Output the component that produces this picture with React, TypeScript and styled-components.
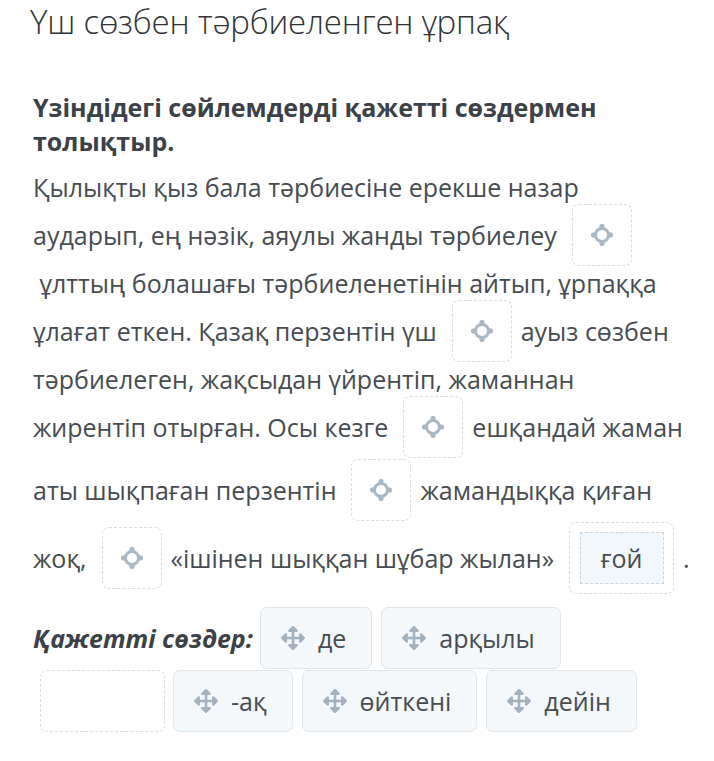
import * as React from 'react';
import styled, {createGlobalStyle} from 'styled-components';
import {FaArrowsAlt} from 'react-icons/fa';

const GlobalStyle = createGlobalStyle`
  body {
    margin: 0;
    background: #ffffff;
    font-family: "Open Sans", "Liberation Sans", sans-serif;
  }
`;

const Page = styled.div`
  width: 714px;
  height: 761px;
  padding: 0 0 0 33px;
  box-sizing: border-box;
  color: #464c52;
  overflow: hidden;
`;

const Title = styled.h1`
  margin: 0 0 0 -3px;
  font-size: 33px;
  line-height: 44px;
  font-weight: 300;
  color: #2f3337;
  letter-spacing: -0.2px;
`;

const Instruction = styled.h2`
  margin: 46px 0 5px;
  font-size: 25px;
  line-height: 34px;
  font-weight: 700;
  color: #3b4147;
  width: 620px;
`;

const Passage = styled.div`
  display: flex;
  flex-direction: column;
  font-size: 25px;
`;

const Line = styled.div<{$push?: number}>`
  display: flex;
  align-items: center;
  height: 48px;
  margin-top: ${p => p.$push || 0}px;
  white-space: pre;
`;

const DropZone = styled.span<{$wide?: boolean}>`
  display: inline-flex;
  align-items: center;
  justify-content: center;
  width: ${p => (p.$wide ? 105 : 60)}px;
  height: ${p => (p.$wide ? 72 : 62)}px;
  margin: 0 9px 0 15px;
  box-sizing: border-box;
  border: 1px dashed #d6dde3;
  border-radius: 7px;
  background: #ffffff;
  flex-shrink: 0;
`;

const Placed = styled.span`
  display: inline-flex;
  align-items: center;
  justify-content: center;
  width: 84px;
  height: 52px;
  box-sizing: border-box;
  border: 1px dashed #cdd5dc;
  background: #f2f7fb;
  color: #464c52;
  font-size: 25px;
`;

const WordBank = styled.div`
  display: flex;
  flex-wrap: wrap;
  align-items: center;
  margin-top: 25px;
  width: 640px;
  row-gap: 1px;
`;

const BankLabel = styled.span`
  font-size: 25px;
  font-weight: 700;
  font-style: italic;
  color: #3b4147;
  margin-right: 7px;
`;

const Chip = styled.span`
  display: inline-flex;
  align-items: center;
  gap: 13px;
  height: 62px;
  padding: 0 25px 0 20px;
  box-sizing: border-box;
  border: 1px solid #dfe6ec;
  border-radius: 7px;
  background: #f4f8fb;
  font-size: 25px;
  color: #464c52;
  margin-right: 9px;
`;

const EmptySlot = styled.span`
  display: inline-block;
  width: 125px;
  height: 62px;
  box-sizing: border-box;
  border: 1px dashed #d6dde3;
  border-radius: 7px;
  margin: 0 8px 0 7px;
`;

const MoveIcon = styled(FaArrowsAlt)`
  width: 24px;
  height: 24px;
  color: #a3b2be;
`;

const Target = () => (
    <svg width="24" height="24" viewBox="0 0 24 24" fill="none">
        <circle cx="12" cy="12" r="6.5" stroke="#a9b8c4" strokeWidth="3"/>
        <rect x="9.5" y="1" width="5" height="6" rx="2" fill="#a9b8c4"/>
        <rect x="9.5" y="17" width="5" height="6" rx="2" fill="#a9b8c4"/>
        <rect x="1" y="9.5" width="6" height="5" rx="2" fill="#a9b8c4"/>
        <rect x="17" y="9.5" width="6" height="5" rx="2" fill="#a9b8c4"/>
    </svg>
);

const Slot = () => (
    <DropZone><Target/></DropZone>
);

const bankTop = ['де', 'арқылы'];
const bankBottom = ['-ақ', 'өйткені', 'дейін'];

export default function App() {
    return (
        <Page>
            <GlobalStyle/>
            <Title>Үш сөзбен тәрбиеленген ұрпақ</Title>
            <Instruction>Үзіндідегі сөйлемдерді қажетті сөздермен толықтыр.</Instruction>
            <Passage>
                <Line>Қылықты қыз бала тәрбиесіне ерекше назар</Line>
                <Line>аударып, ең нәзік, аяулы жанды тәрбиелеу<Slot/></Line>
                <Line> ұлттың болашағы тәрбиеленетінін айтып, ұрпаққа</Line>
                <Line>ұлағат еткен. Қазақ перзентін үш<Slot/>ауыз сөзбен</Line>
                <Line>тәрбиелеген, жақсыдан үйрентіп, жаманнан</Line>
                <Line>жирентіп отырған. Осы кезге<Slot/>ешқандай жаман</Line>
                <Line $push={15}>аты шықпаған перзентін<Slot/>жамандыққа қиған</Line>
                <Line $push={20}>
                    жоқ,<Slot/>«ішінен шыққан шұбар жылан»
                    <DropZone $wide><Placed>ғой</Placed></DropZone>.
                </Line>
            </Passage>
            <WordBank>
                <BankLabel>Қажетті сөздер:</BankLabel>
                {bankTop.map(w => (
                    <Chip key={w}><MoveIcon/>{w}</Chip>
                ))}
                <EmptySlot/>
                {bankBottom.map(w => (
                    <Chip key={w}><MoveIcon/>{w}</Chip>
                ))}
            </WordBank>
        </Page>
    );
}
